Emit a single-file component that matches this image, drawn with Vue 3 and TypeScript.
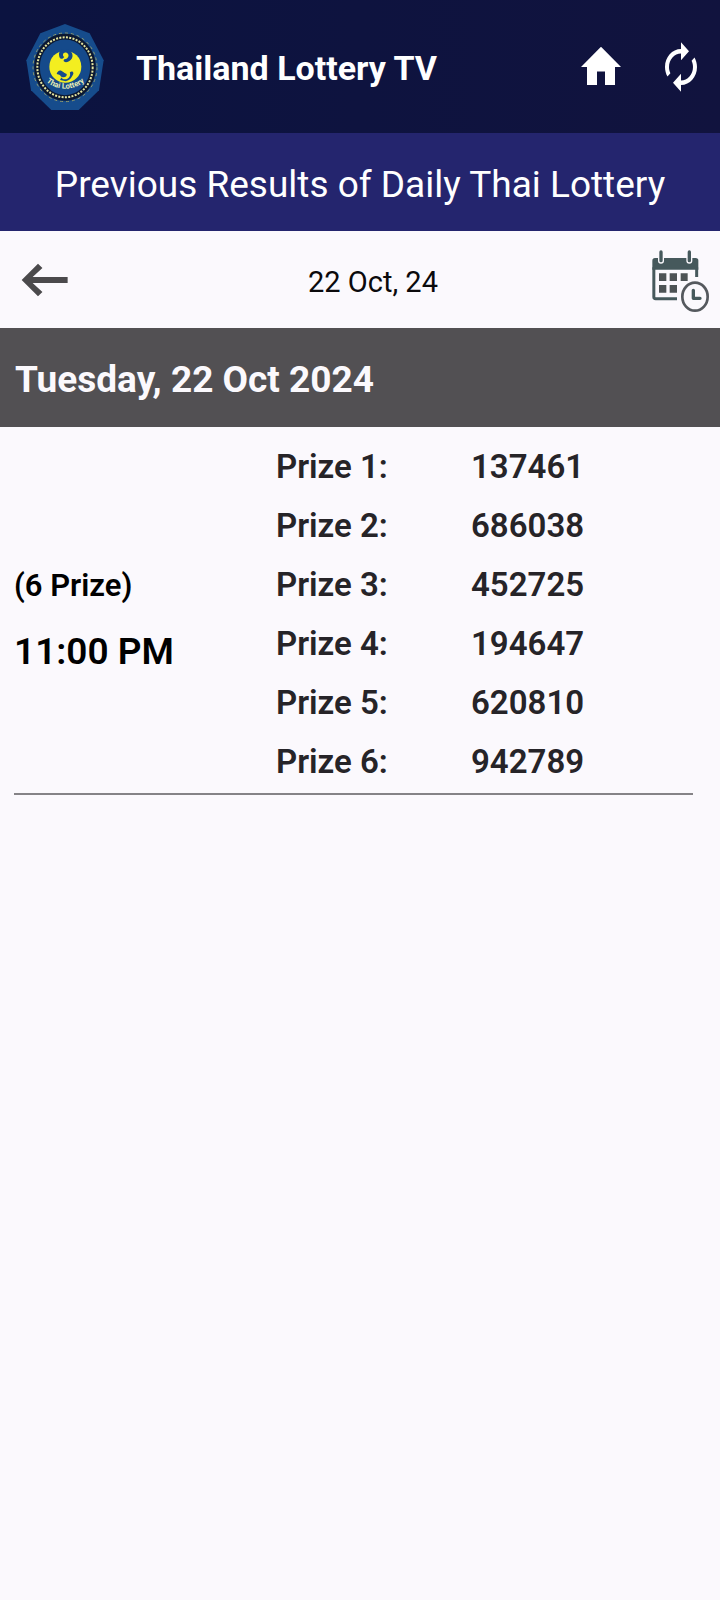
<script setup lang="ts">
interface Prize {
  label: string
  value: string
}

const prizes: Prize[] = [
  { label: 'Prize 1:', value: '137461' },
  { label: 'Prize 2:', value: '686038' },
  { label: 'Prize 3:', value: '452725' },
  { label: 'Prize 4:', value: '194647' },
  { label: 'Prize 5:', value: '620810' },
  { label: 'Prize 6:', value: '942789' },
]
</script>

<template>
  <div class="screen">
    <header class="app-bar">
      <svg class="logo" viewBox="48 40 234 258" preserveAspectRatio="none" role="img" aria-label="Thai Lottery logo">
        <defs>
          <path id="logo-arc" d="M84 160A82 74 0 0 0 248 160" />
        </defs>
        <polygon points="165,40 239,68 281,149 267,239 206,298 124,298 63,239 49,149 91,68" fill="#164c8c" />
        <ellipse cx="165" cy="170" rx="96" ry="103" fill="none" stroke="#8f9a6c" stroke-width="3" stroke-dasharray="9 9" />
        <ellipse cx="165" cy="170" rx="84" ry="92" fill="#154a8b" stroke="#0c1830" stroke-width="17" />
        <ellipse cx="165" cy="170" rx="83" ry="90" fill="none" stroke="#e6e6a0" stroke-width="6" stroke-dasharray="6 4" />
        <ellipse cx="166" cy="168" rx="48" ry="48" fill="#f3ee20" />
        <path d="M148 138C143 118 158 112 172 116C191 122 193 144 177 152C165 158 157 152 163 146C176 145 180 131 170 126C160 122 155 134 163 139C156 147 151 146 148 138Z" fill="#154a8b" />
        <path d="M140 190C143 178 152 176 160 184C167 191 174 191 180 185C187 179 194 186 188 194C182 206 176 209 168 212L150 208C155 202 154 195 148 192Z" fill="#154a8b" />
        <path d="M159 172C177 174 185 189 178 199C170 211 155 206 150 195C161 204 172 198 170 190C169 184 163 181 159 172Z" fill="#f3ee20" />
        <text class="logo-text" fill="#e9eeb8">
          <textPath href="#logo-arc" startOffset="50%" text-anchor="middle">Thai Lottery</textPath>
        </text>
      </svg>
      <h1 class="app-title">Thailand Lottery TV</h1>
      <button class="bar-button" type="button" aria-label="Home">
        <svg class="bar-icon" viewBox="0 0 24 24" preserveAspectRatio="none" aria-hidden="true">
          <path d="M10 20v-6h4v6h5v-8h3L12 3 2 12h3v8z" />
        </svg>
      </button>
      <button class="bar-button" type="button" aria-label="Refresh">
        <svg class="bar-icon" viewBox="0 0 24 24" preserveAspectRatio="none" aria-hidden="true">
          <path d="M12 6v3l4-4-4-4v3c-4.42 0-8 3.58-8 8 0 1.57.46 3.03 1.24 4.26L6.7 14.8c-.45-.83-.7-1.79-.7-2.8 0-3.31 2.69-6 6-6zm6.76 1.74L17.3 9.2c.44.84.7 1.79.7 2.8 0 3.31-2.69 6-6 6v-3l-4 4 4 4v-3c4.42 0 8-3.58 8-8 0-1.57-.46-3.03-1.24-4.26z" />
        </svg>
      </button>
    </header>

    <h2 class="banner">Previous Results of Daily Thai Lottery</h2>

    <nav class="date-nav" aria-label="Result date">
      <button class="nav-back" type="button" aria-label="Previous day">
        <svg class="back-icon" viewBox="0 0 24 24" aria-hidden="true">
          <path d="M9 19l1.900-1.900L6.700 13.300H21.700v-2.600H6.700l4.200-3.800L9 5l-7 7 7 7z" />
        </svg>
      </button>
      <span class="nav-date">22 Oct, 24</span>
      <button class="nav-calendar" type="button" aria-label="Choose a date">
        <svg class="calendar-icon" viewBox="97 60 171 186" aria-hidden="true">
          <path d="M106 84H228Q236 84 236 92V119H98V92Q98 84 106 84Z" fill="#46595c" />
          <path d="M102.500 112V201Q102.500 206 108 206H172M231 112V141" fill="none" stroke="#46595c" stroke-width="9" />
          <path d="M124 84V92M209 84V92" stroke="#fbf9fd" stroke-width="18" stroke-linecap="round" />
          <path d="M124 66V92M209 66V92" stroke="#46595c" stroke-width="10" stroke-linecap="round" />
          <path d="M118 130h22v23h-22zM150 130h22v23h-22zM183 130h21v23h-21zM118 165h22v23h-22zM150 165h22v23h-22z" fill="#4d5355" />
          <ellipse cx="226" cy="200" rx="45" ry="49" fill="#fbf9fd" />
          <ellipse cx="226" cy="200" rx="38" ry="42" fill="#fbf9fd" stroke="#55595e" stroke-width="8" />
          <path d="M221 181V205H241" fill="none" stroke="#46595c" stroke-width="10" stroke-linecap="round" stroke-linejoin="round" />
        </svg>
      </button>
    </nav>

    <main>
      <h3 class="day-title">Tuesday, 22 Oct 2024</h3>
      <section class="draw">
        <div class="draw-info">
          <p class="draw-count">(6 Prize)</p>
          <p class="draw-time">11:00 PM</p>
        </div>
        <table class="prizes" aria-label="Prizes of the 11:00 PM draw">
          <tbody>
            <tr v-for="prize in prizes" :key="prize.label">
              <th scope="row">{{ prize.label }}</th>
              <td>{{ prize.value }}</td>
            </tr>
          </tbody>
        </table>
      </section>
    </main>
  </div>
</template>

<style>
body {
  margin: 0;
  background: #fbf9fd;
}
</style>

<style scoped>
.screen {
  min-height: 100vh;
  background: #fbf9fd;
  color: #000;
  font-family: Roboto, 'Liberation Sans', sans-serif;
}

h1,
h2,
h3,
p {
  margin: 0;
}

button {
  display: flex;
  align-items: center;
  padding: 0;
  border: 0;
  background: none;
  cursor: pointer;
}

.app-bar {
  display: flex;
  align-items: center;
  box-sizing: border-box;
  height: 133px;
  padding: 0 15px 0 26px;
  background: linear-gradient(90deg, #0b1340, #11133e);
}

.logo {
  flex: none;
  width: 78px;
  height: 86px;
}

.logo-text {
  font: 700 23px Roboto, sans-serif;
}

.app-title {
  flex: 1;
  margin-left: 32px;
  padding-top: 2px;
  color: #fff;
  font-size: 34px;
  font-weight: 700;
  line-height: 44px;
}

.bar-button + .bar-button {
  margin-left: 32px;
}

.bar-icon {
  width: 48px;
  height: 54px;
  fill: #fff;
}

.banner {
  padding: 28px 8px 22px;
  background: #24256e;
  color: #fff;
  font-size: 37px;
  font-weight: 400;
  line-height: 48px;
  text-align: center;
}

.date-nav {
  display: flex;
  height: 97px;
}

.nav-back {
  width: 98px;
  padding-left: 17px;
}

.back-icon {
  width: 56px;
  height: 56px;
  fill: #4b4a4c;
}

.nav-date {
  flex: 1;
  align-self: center;
  padding-top: 4px;
  color: #0b0a0c;
  font-size: 29px;
  line-height: 36px;
  text-align: center;
}

.nav-calendar {
  justify-content: flex-end;
  width: 72px;
  padding: 3px 11px 0 0;
}

.calendar-icon {
  width: 57px;
  height: 62px;
}

.day-title {
  padding: 28px 15px 23px;
  background: #525053;
  color: #fbf9fd;
  font-size: 37px;
  font-weight: 700;
  line-height: 48px;
}

.draw {
  display: flex;
  align-items: center;
  margin: 0 27px 0 14px;
  padding: 10px 0 2px;
  border-bottom: 2px solid #858387;
}

.draw-info {
  flex: 0 0 262px;
}

.draw-count {
  margin-top: 12px;
  font-size: 31px;
  font-weight: 600;
  line-height: 48px;
}

.draw-time {
  margin-top: 16px;
  font-size: 37px;
  font-weight: 600;
  line-height: 52px;
}

.prizes {
  flex: 1;
  border-collapse: collapse;
  color: #262428;
  font-size: 33px;
  line-height: 59px;
}

.prizes th,
.prizes td {
  padding: 0;
  font-weight: 600;
  text-align: left;
}

.prizes th {
  width: 195px;
}
</style>
